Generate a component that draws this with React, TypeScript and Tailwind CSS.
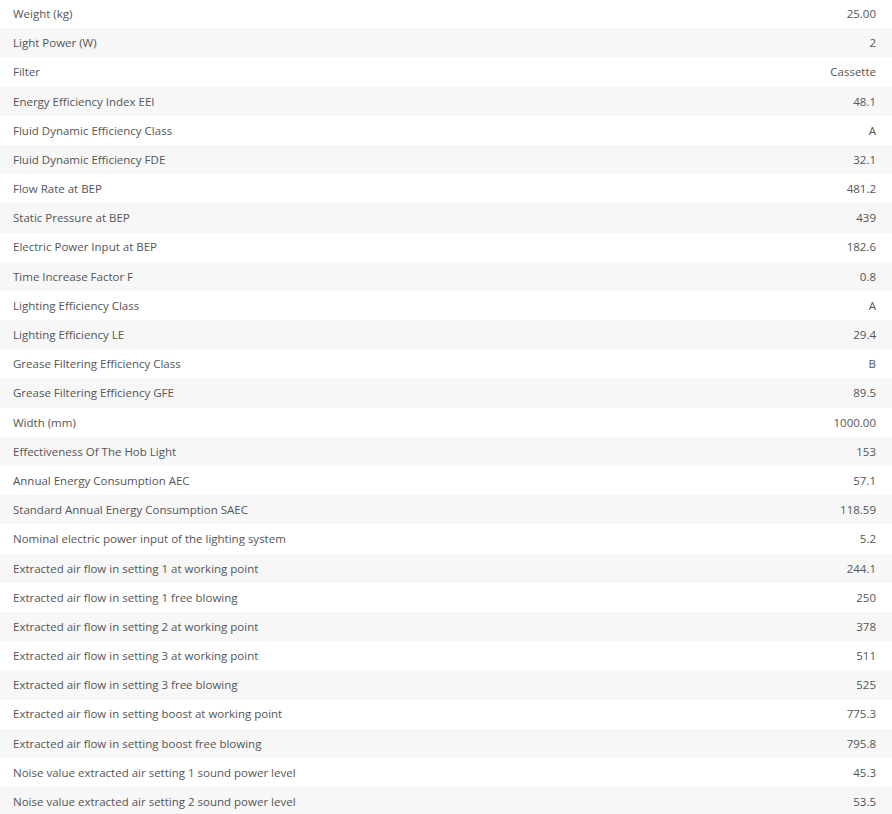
import React from "react";

const rows: [string, string][] = [
  ["Weight (kg)", "25.00"],
  ["Light Power (W)", "2"],
  ["Filter", "Cassette"],
  ["Energy Efficiency Index EEI", "48.1"],
  ["Fluid Dynamic Efficiency Class", "A"],
  ["Fluid Dynamic Efficiency FDE", "32.1"],
  ["Flow Rate at BEP", "481.2"],
  ["Static Pressure at BEP", "439"],
  ["Electric Power Input at BEP", "182.6"],
  ["Time Increase Factor F", "0.8"],
  ["Lighting Efficiency Class", "A"],
  ["Lighting Efficiency LE", "29.4"],
  ["Grease Filtering Efficiency Class", "B"],
  ["Grease Filtering Efficiency GFE", "89.5"],
  ["Width (mm)", "1000.00"],
  ["Effectiveness Of The Hob Light", "153"],
  ["Annual Energy Consumption AEC", "57.1"],
  ["Standard Annual Energy Consumption SAEC", "118.59"],
  ["Nominal electric power input of the lighting system", "5.2"],
  ["Extracted air flow in setting 1 at working point", "244.1"],
  ["Extracted air flow in setting 1 free blowing", "250"],
  ["Extracted air flow in setting 2 at working point", "378"],
  ["Extracted air flow in setting 3 at working point", "511"],
  ["Extracted air flow in setting 3 free blowing", "525"],
  ["Extracted air flow in setting boost at working point", "775.3"],
  ["Extracted air flow in setting boost free blowing", "795.8"],
  ["Noise value extracted air setting 1 sound power level", "45.3"],
  ["Noise value extracted air setting 2 sound power level", "53.5"],
];

export default function App() {
  return (
    <div
      className="w-[892px] h-[814px] overflow-hidden bg-white text-[11.5px] text-[#555]"
      style={{ fontFamily: '"Open Sans", "Noto Sans", sans-serif' }}
    >
      <div className="-mt-[1px] flex flex-col">
        {rows.map(([k, v], i) => (
          <div
            key={i}
            className={`flex h-[29.2px] items-center justify-between pl-[13px] pr-[16px] ${
              i % 2 === 1 ? "bg-[#f7f7f7]" : "bg-white"
            }`}
          >
            <span>{k}</span>
            <span>{v}</span>
          </div>
        ))}
      </div>
    </div>
  );
}
